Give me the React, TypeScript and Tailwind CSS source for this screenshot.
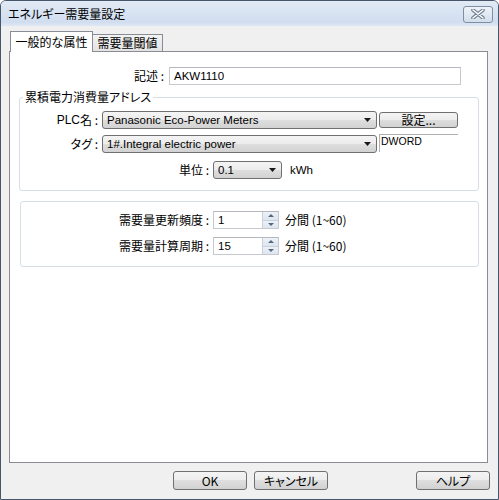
import React from "react";

const jp = "font-['Noto_Sans_CJK_JP',sans-serif] [font-feature-settings:'palt']";
const lat = "font-['Liberation_Sans','Noto_Sans_CJK_JP',sans-serif]";

function Arrow() {
  return (
    <svg width="7" height="4" viewBox="0 0 7 4" className="shrink-0">
      <path d="M0 0 H7 L3.5 4 Z" fill="#1a1a1a" />
    </svg>
  );
}

function Select({ w, text }: { w: string; text: string }) {
  return (
    <div
      className={`${w} h-[18px] flex items-center justify-between border border-[#707070] rounded-[3px] bg-[linear-gradient(to_bottom,#f4f4f4_0%,#ececec_50%,#dedede_50%,#d2d2d2_100%)] pl-[4px] pr-[5px]`}
    >
      <span className={`${lat} text-[11.5px] leading-[14px] text-black whitespace-nowrap`}>{text}</span>
      <Arrow />
    </div>
  );
}

function Spin() {
  return (
    <div className="w-[16px] h-full flex flex-col border-l border-[#c7d0dc]">
      <div className="flex-1 flex items-center justify-center bg-[linear-gradient(to_bottom,#eef2f7,#dde5ef)] border-b border-[#c7d0dc]">
        <svg width="6" height="3" viewBox="0 0 6 3"><path d="M0 3 L3 0 L6 3 Z" fill="#56687f" /></svg>
      </div>
      <div className="flex-1 flex items-center justify-center bg-[linear-gradient(to_bottom,#eef2f7,#dde5ef)]">
        <svg width="6" height="3" viewBox="0 0 6 3"><path d="M0 0 L6 0 L3 3 Z" fill="#56687f" /></svg>
      </div>
    </div>
  );
}

function Button({ children, w, h, cls = "" }: { children: React.ReactNode; w: string; h: string; cls?: string }) {
  return (
    <div
      className={`${w} ${h} ${cls} flex items-center justify-center border border-[#707070] rounded-[3px] bg-[linear-gradient(to_bottom,#f4f4f4_0%,#ececec_50%,#dedede_50%,#d2d2d2_100%)] ${jp} text-[12px] leading-[14px] text-black`}
    >
      {children}
    </div>
  );
}

export default function App() {
  return (
    <div className="w-[499px] h-[500px] flex flex-col bg-[#f0f0f0] border border-[#47566a] rounded-t-[6px] overflow-hidden">
      {/* Title bar */}
      <div className="h-[25px] shrink-0 flex items-center justify-between pl-[7px] pr-[5px] bg-[linear-gradient(to_bottom,#e1eaf5,#d1def0_85%,#dfe8f3)]">
        <span className={`${jp} text-[12px] leading-[14px] text-black`}>エネルギー需要量設定</span>
        <div className="w-[30px] h-[17px] mt-[1px] flex items-center justify-center border border-[#7f8ea3] rounded-[3px] bg-[linear-gradient(to_bottom,#eef3f9,#d3deeb)]">
          <svg width="14" height="10" viewBox="0 0 14 10">
            <path d="M2 1 L12 9 M12 1 L2 9" stroke="#6d7d92" strokeWidth="3.6" strokeLinecap="round" />
            <path d="M2 1 L12 9 M12 1 L2 9" stroke="#ffffff" strokeWidth="1.6" strokeLinecap="round" />
          </svg>
        </div>
      </div>

      {/* Tabs */}
      <div className="mt-[5px] h-[20px] flex items-end ml-[9px]">
        <div className={`relative z-10 w-[83px] h-[21px] -mb-px bg-white border border-b-0 border-[#898c95] flex items-center justify-center ${jp} text-[12px] leading-[14px] text-black`}>
          一般的な属性
        </div>
        <div className={`w-[70px] h-[17px] border border-l-0 border-b-0 border-[#898c95] bg-[linear-gradient(to_bottom,#f3f3f3,#e3e3e3)] flex items-center justify-center ${jp} text-[12px] leading-[14px] text-black`}>
          需要量閾値
        </div>
      </div>

      {/* Panel */}
      <div className="ml-[8px] w-[479px] h-[412px] bg-white border border-[#898c95] flex flex-col">
        {/* 記述 */}
        <div className="mt-[15px] flex items-center h-[18px]">
          <div className={`w-[154px] text-right ${jp} text-[12px] leading-[14px] text-black`}>記述 :</div>
          <div className="ml-[5px] w-[292px] h-[18px] border border-[#c6c9ce] border-t-[#b4b7bd] flex items-center pl-[4px]">
            <span className={`${lat} text-[11.5px] leading-[14px] text-black`}>AKW1110</span>
          </div>
        </div>

        {/* Group 1 */}
        <div className="relative mt-[12px] ml-[9px] w-[460px] h-[94px] border border-[#d5dfe5] rounded-[3px] flex flex-col">
          <span className={`absolute left-[3px] -top-[8px] bg-white px-[2px] ${jp} text-[12px] leading-[14px] text-black`}>
            累積電力消費量アドレス
          </span>
          {/* PLC */}
          <div className="mt-[13px] flex items-start">
            <div className={`w-[78px] h-[18px] flex items-center justify-end ${jp} text-[12px] leading-[14px] text-black`}>
              <span className={lat + " text-[12px]"}>PLC</span>名 :
            </div>
            <div className="ml-[4px]">
              <Select w="w-[275px]" text="Panasonic Eco-Power Meters" />
            </div>
            <Button w="w-[79px]" h="h-[16px]" cls="ml-[2px] mt-px">設定...</Button>
          </div>
          {/* Tag */}
          <div className="mt-[6px] flex items-start">
            <div className={`w-[78px] h-[18px] flex items-center justify-end ${jp} text-[12px] leading-[14px] text-black`}>
              タグ :
            </div>
            <div className="ml-[4px]">
              <Select w="w-[275px]" text="1#.Integral electric power" />
            </div>
            <div className={`ml-[2px] -mt-[1px] w-[79px] h-[18px] border-t border-l border-[#b0b0b0] pl-[1px] ${lat} text-[10.5px] leading-[13px] text-black`}>
              DWORD
            </div>
          </div>
          {/* Unit */}
          <div className="mt-[8px] flex items-center">
            <div className={`w-[189px] text-right ${jp} text-[12px] leading-[14px] text-black`}>単位 :</div>
            <div className="ml-[4px]">
              <Select w="w-[69px]" text="0.1" />
            </div>
            <span className={`ml-[8px] ${lat} text-[11.5px] leading-[14px] text-black`}>kWh</span>
          </div>
        </div>

        {/* Group 2 */}
        <div className="mt-[10px] ml-[10px] w-[459px] h-[66px] border border-[#d5dfe5] rounded-[3px] flex flex-col">
          <div className="mt-[9px] flex items-center">
            <div className={`w-[188px] text-right ${jp} text-[12px] leading-[14px] text-black`}>需要量更新頻度 :</div>
            <div className="ml-[4px] w-[66px] h-[18px] border border-[#c6c9ce] border-t-[#b4b7bd] flex items-center">
              <span className={`flex-1 pl-[4px] ${lat} text-[11.5px] leading-[14px] text-black`}>1</span>
              <Spin />
            </div>
            <span className={`ml-[6px] ${jp} text-[12px] leading-[14px] text-black`}>分間 (1~60)</span>
          </div>
          <div className="mt-[8px] flex items-center">
            <div className={`w-[188px] text-right ${jp} text-[12px] leading-[14px] text-black`}>需要量計算周期 :</div>
            <div className="ml-[4px] w-[66px] h-[18px] border border-[#c6c9ce] border-t-[#b4b7bd] flex items-center">
              <span className={`flex-1 pl-[4px] ${lat} text-[11.5px] leading-[14px] text-black`}>15</span>
              <Spin />
            </div>
            <span className={`ml-[6px] ${jp} text-[12px] leading-[14px] text-black`}>分間 (1~60)</span>
          </div>
        </div>
      </div>

      {/* Buttons */}
      <div className="mt-[8px] flex items-center">
        <Button w="w-[74px]" h="h-[19px]" cls="ml-[172px]">OK</Button>
        <Button w="w-[74px]" h="h-[19px]" cls="ml-[7px]">キャンセル</Button>
        <Button w="w-[74px]" h="h-[19px]" cls="ml-auto mr-[8px]">ヘルプ</Button>
      </div>
    </div>
  );
}
